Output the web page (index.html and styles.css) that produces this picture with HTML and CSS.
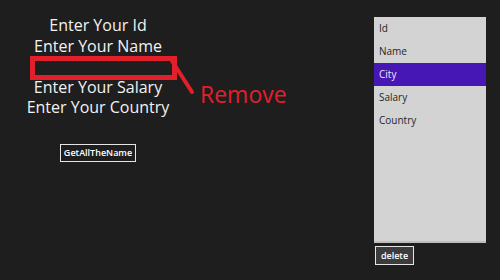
FILE: index.html
```html
<!DOCTYPE html>
<html lang="en">
<head>
  <meta charset="UTF-8" />
  <title>Employees</title>
  <link rel="stylesheet" href="styles.css">
</head>
<body>
  <div class="form">
    <div class="prompt">Enter Your Id</div>
    <div class="prompt">Enter Your Name</div>
    <div class="prompt blank"></div>
    <div class="prompt">Enter Your Salary</div>
    <div class="prompt">Enter Your Country</div>
    <button class="btn get-all">GetAllTheName</button>
  </div>

  <div class="side">
    <ul class="field-list">
      <li>Id</li>
      <li>Name</li>
      <li class="selected">City</li>
      <li>Salary</li>
      <li>Country</li>
    </ul>
    <button class="btn delete">delete</button>
  </div>

  <!-- annotation on top of the screenshot -->
  <div class="mark-box"></div>
  <svg class="mark-line" width="40" height="50" viewBox="0 0 40 50">
    <line x1="4" y1="5" x2="24" y2="36" stroke="#e2202b" stroke-width="4" stroke-linecap="round" />
  </svg>
  <div class="mark-text">Remove</div>
</body>
</html>
```

FILE: styles.css
```css
* {
  box-sizing: border-box;
}

body {
  margin: 0;
  width: 500px;
  height: 280px;
  background: #1e1e1e;
  color: #f2f2f2;
  font-family: 'Open Sans', 'Noto Sans', sans-serif;
  display: flex;
  position: relative;
  overflow: hidden;
}

.form {
  width: 196px;
  padding-top: 15px;
  display: flex;
  flex-direction: column;
  align-items: center;
}

.prompt {
  font-size: 16px;
  line-height: 20.5px;
  height: 20.5px;
  white-space: nowrap;
}

.btn {
  font-family: 'Open Sans', 'Noto Sans', sans-serif;
  font-size: 9px;
  font-weight: 600;
  color: #ffffff;
  border: 1.5px solid #e6e6e6;
  padding: 0;
  cursor: pointer;
}

.get-all {
  margin-top: 26px;
  width: 76px;
  height: 18px;
  background: #1e1e1e;
}

.side {
  margin-left: auto;
  margin-right: 14px;
  padding-top: 17px;
  display: flex;
  flex-direction: column;
  align-items: flex-start;
}

.field-list {
  list-style: none;
  margin: 0;
  padding: 0;
  width: 112px;
  height: 226px;
  background: #d3d3d3;
  border-bottom: 2px solid #bdbdbd;
}

.field-list li {
  height: 23px;
  line-height: 23px;
  padding-left: 5px;
  font-size: 10px;
  color: #262626;
}

.field-list li.selected {
  background: #4617b4;
  color: #ece6ff;
}

.delete {
  margin-top: 3px;
  margin-left: 1px;
  width: 39px;
  height: 19px;
  background: #3c3c3c;
}

.mark-box {
  position: absolute;
  left: 30px;
  top: 56px;
  width: 147px;
  height: 24px;
  border: 5px solid #e2202b;
}

.mark-line {
  position: absolute;
  left: 168px;
  top: 56px;
}

.mark-text {
  position: absolute;
  left: 200px;
  top: 78px;
  font-size: 23px;
  color: #e2202b;
}
```
